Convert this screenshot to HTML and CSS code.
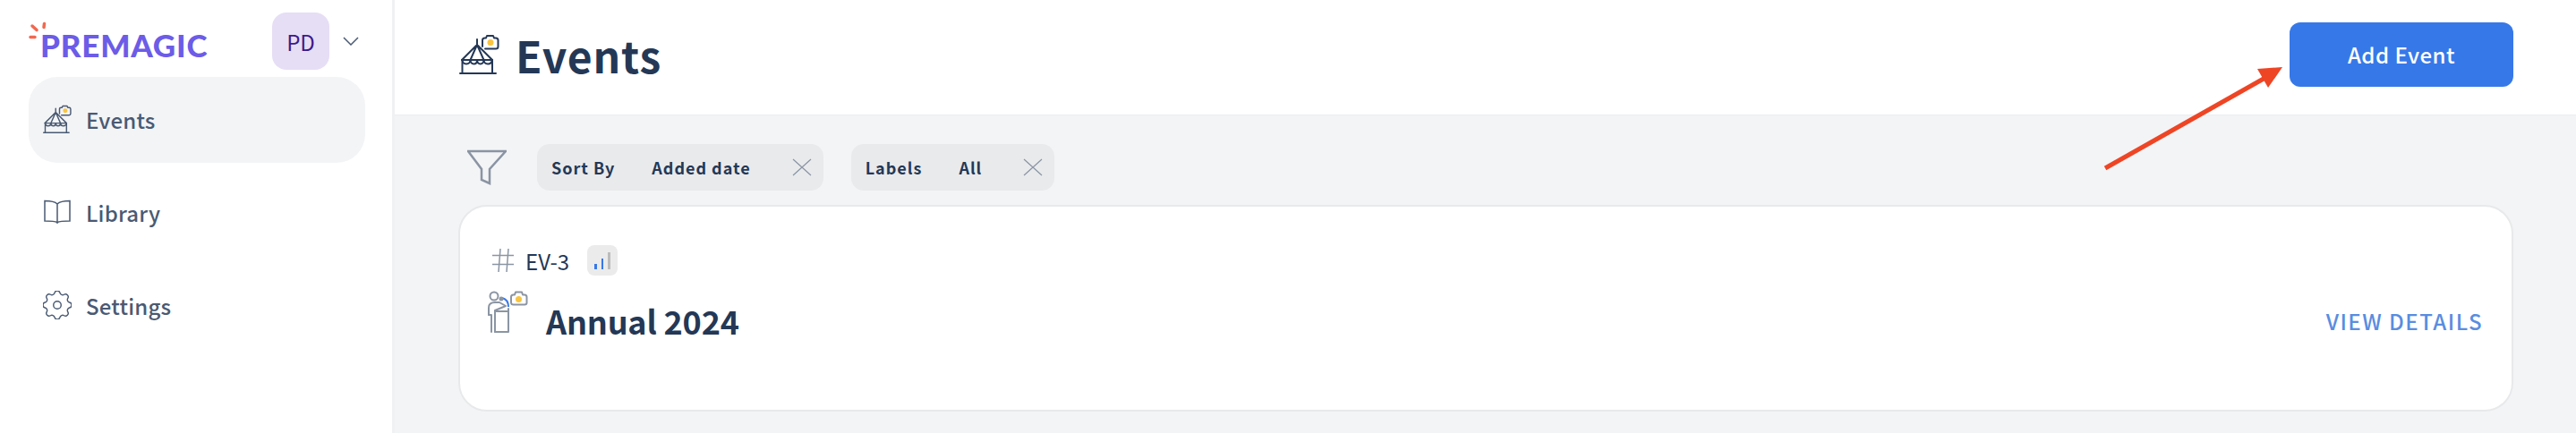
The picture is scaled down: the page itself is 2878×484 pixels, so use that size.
FILE: index.html
```html
<!doctype html>
<html lang="en">
 <head>
  <meta charset="utf-8">
  <title>Events</title>
  <link rel="stylesheet" href="styles.css">
 </head>
 <body>
  <svg class="icon-defs" width="0" height="0">
   <symbol id="tent" viewBox="0 0 45 45">
    <g fill="none" stroke="currentColor" stroke-width="2" stroke-linecap="round" stroke-linejoin="round">
     <path d="M1 44H41M3.500 43V30M37 43V30M3 29L20 12L37 29M20 12V6M20 12L12.500 29M20 12L27.500 29"/>
     <path d="M3 29H37M3.500 29C4 35 12 35 12.500 29C13 35 20 35 20 29C20.500 35 27 35 27.500 29C28 35 36 35 37 29"/>
     <path d="M26 14V7C26 5.500 27 4.500 28.500 4.500H30L31 2H38L39 4.500H41C42.500 4.500 43.500 5.500 43.500 7V14C43.500 15.500 42.500 16.500 41 16.500H29"/>
    </g>
    <circle cx="35" cy="9.500" r="3.500" fill="#f9c440"/>
   </symbol>
  </svg>
  <div class="page">
   <aside class="sidebar">
    <div class="sidebar-top">
     <div class="logo">
      <svg class="logo-spark" viewBox="0 0 20 22" width="20" height="22">
       <g stroke="#f2684f" stroke-width="3.500" stroke-linecap="round">
        <path d="M2 17.500H7M4 5L9 9.500M17.500 2.500L17 6.500"/>
       </g>
      </svg>
      <span class="logo-text">PREMAGIC</span>
     </div>
     <div class="avatar">PD</div>
     <svg class="chevron" viewBox="0 0 18 10" width="18" height="10">
      <path d="M1 1L9 9L17 1" fill="none" stroke="#4a5a73" stroke-width="1.500"/>
     </svg>
    </div>
    <nav class="nav">
     <a class="nav-item nav-item-active">
      <svg class="nav-icon" width="32" height="32"><use href="#tent"/></svg>
      <span>Events</span>
     </a>
     <a class="nav-item">
      <svg class="nav-icon" viewBox="0 0 30 28" width="30" height="28">
       <path d="M15 25V5C12 2 6 1.500 1 1.500V24C6 24 12 24 15 25.500C18 24 24 24 29 24V1.500C24 1.500 18 2 15 5M15 25.500V27" fill="none" stroke="currentColor" stroke-width="1.500"/>
      </svg>
      <span>Library</span>
     </a>
     <a class="nav-item">
      <svg class="nav-icon" viewBox="3 3 18 18" width="32" height="32">
       <path d="M10.325 4.317c.426-1.756 2.924-1.756 3.35 0a1.724 1.724 0 002.573 1.066c1.543-.94 3.31.826 2.37 2.37a1.724 1.724 0 001.065 2.572c1.756.426 1.756 2.924 0 3.35a1.724 1.724 0 00-1.066 2.573c.94 1.543-.826 3.31-2.37 2.37a1.724 1.724 0 00-2.572 1.065c-.426 1.756-2.924 1.756-3.35 0a1.724 1.724 0 00-2.573-1.066c-1.543.94-3.31-.826-2.37-2.37a1.724 1.724 0 00-1.065-2.572c-1.756-.426-1.756-2.924 0-3.35a1.724 1.724 0 001.066-2.573c-.94-1.543.826-3.31 2.37-2.37.996.608 2.296.07 2.572-1.065z" fill="none" stroke="currentColor" stroke-width="0.800"/>
       <circle cx="12" cy="12" r="2.400" fill="none" stroke="currentColor" stroke-width="0.800"/>
      </svg>
      <span>Settings</span>
     </a>
    </nav>
   </aside>
   <main class="main">
    <header class="header">
     <div class="header-title">
      <svg class="header-icon" width="45" height="45"><use href="#tent"/></svg>
      <h1>Events</h1>
     </div>
     <button class="btn-primary">Add Event</button>
    </header>
    <section class="content">
     <div class="filters">
      <svg class="funnel" viewBox="0 0 44 40" width="44" height="40">
       <path d="M1 2H43L25 22V38L16 34V22Z" fill="none" stroke="#8a94a3" stroke-width="2.500"/>
      </svg>
      <div class="chip">
       <span class="chip-label">Sort By</span>
       <span class="chip-value">Added date</span>
       <svg class="chip-close" viewBox="0 0 22 20" width="22" height="20"><path d="M1 1L21 19M21 1L1 19" stroke="#8a94a3" stroke-width="1.200"/></svg>
      </div>
      <div class="chip">
       <span class="chip-label">Labels</span>
       <span class="chip-value">All</span>
       <svg class="chip-close" viewBox="0 0 22 20" width="22" height="20"><path d="M1 1L21 19M21 1L1 19" stroke="#8a94a3" stroke-width="1.200"/></svg>
      </div>
     </div>
     <article class="card">
      <div class="card-code">
       <svg class="hash" viewBox="0 0 24 26" width="24" height="26">
        <path d="M9 0L7 26M18 0L16 26M0 7.500H24M0 17.500H24" fill="none" stroke="#8b95a3" stroke-width="1.500"/>
       </svg>
       <span>EV-3</span>
       <div class="signal">
        <i class="bar bar-1"></i>
        <i class="bar bar-2"></i>
        <i class="bar bar-3"></i>
       </div>
      </div>
      <div class="card-main">
       <svg class="speaker" viewBox="0 0 45 49" width="45" height="49">
        <g fill="none" stroke="#8b95a3" stroke-width="2" stroke-linecap="round" stroke-linejoin="round">
         <circle cx="7" cy="7" r="4.500"/>
         <path d="M1 28V20C1 15 4 14 8 14H13L20 18L8 23V47"/>
         <path d="M1 28H4V47M8 47H23V21M8 24H23"/>
         <path d="M26 14V8C26 6.500 27 5.500 28.500 5.500H30L31 2.500H38L39 5.500H41C42.500 5.500 43.500 6.500 43.500 8V14.500C43.500 16 42.500 16.500 41 16.500H28.500C27 16.500 26 15.500 26 14Z"/>
        </g>
        <path d="M16 9C20 10 23 13 23 19" fill="none" stroke="#3778e8" stroke-width="2"/>
        <circle cx="15" cy="10" r="2.500" fill="#8b95a3"/>
        <circle cx="34.500" cy="10.500" r="3.500" fill="#f9c440"/>
       </svg>
       <h2>Annual 2024</h2>
       <a class="view-details">VIEW DETAILS</a>
      </div>
     </article>
    </section>
   </main>
  </div>
  <!-- red annotation arrow drawn over the screenshot -->
  <svg class="annotation" viewBox="0 0 205 125" width="205" height="125">
   <path d="M2 117L186 13" stroke="#ee4525" stroke-width="5"/>
   <path d="M200 4L172 6L184 27Z" fill="#ee4525"/>
  </svg>
 </body>
</html>
```

FILE: styles.css
```css
body {
	margin: 0;
	padding: 0;
	background-color: #ffffff;
	font-family: "Noto Sans CJK JP", "Noto Sans", sans-serif;
	color: #243856;
}

.icon-defs {
	position: absolute;
}

.page {
	display: flex;
	height: 484px;
	overflow: hidden;
}

/* sidebar */
.sidebar {
	flex-shrink: 0;
	width: 376px;
	border-right: 3px solid #f0f1f3;
	padding: 14px 30px 0 32px;
}

.sidebar-top {
	display: flex;
	align-items: center;
	height: 64px;
}

.logo {
	display: flex;
	align-items: flex-end;
	flex: 1;
	position: relative;
	padding-left: 13px;
}

.logo-spark {
	position: absolute;
	left: 0;
	top: -1px;
}

.logo-text {
	font-family: "Lato", sans-serif;
	font-weight: 900;
	font-size: 35px;
	line-height: 34px;
	color: #6c5ce7;
	letter-spacing: 0.8px;
	margin-top: 8px;
}

.avatar {
	width: 64px;
	height: 64px;
	border-radius: 16px;
	background-color: #e6def5;
	color: #3d1a8c;
	font-size: 24px;
	display: flex;
	align-items: center;
	justify-content: center;
}

.chevron {
	margin: 0 7px 0 15px;
}

.nav {
	display: flex;
	flex-direction: column;
	gap: 8px;
	margin-top: 8px;
}

.nav-item {
	display: flex;
	align-items: center;
	gap: 16px;
	height: 96px;
	box-sizing: border-box;
	padding: 0 0 2px 16px;
	border-radius: 32px;
	color: #4a5a73;
	font-size: 24px;
	font-weight: 500;
	letter-spacing: 0.2px;
}

.nav-item-active {
	background-color: #f3f4f6;
}

.nav-icon {
	width: 32px;
	flex-shrink: 0;
}

/* main */
.main {
	flex: 1;
	display: flex;
	flex-direction: column;
	min-width: 0;
}

.header {
	height: 129px;
	flex-shrink: 0;
	display: flex;
	align-items: center;
	justify-content: space-between;
	padding: 0 70px 7px 72px;
	box-sizing: border-box;
	border-bottom: 1px solid #ecedef;
}

.header-title {
	display: flex;
	align-items: center;
	gap: 18px;
}

.header-title h1 {
	margin: 0;
	font-size: 48px;
	font-weight: 700;
	line-height: 60px;
	letter-spacing: 0.8px;
}

.btn-primary {
	width: 250px;
	height: 72px;
	border: 0;
	border-radius: 12px;
	background-color: #3778e8;
	color: #ffffff;
	font-family: inherit;
	font-size: 24px;
	font-weight: 500;
	letter-spacing: 0.5px;
}

.content {
	flex: 1;
	background-color: #f3f4f6;
	padding: 32px 70px 0 71px;
}

.filters {
	display: flex;
	align-items: center;
	gap: 31px;
	height: 52px;
	padding-left: 10px;
}

.funnel {
	margin: 0 3px 0 0;
}

.chip {
	display: flex;
	align-items: center;
	height: 52px;
	padding: 0 13px 0 16px;
	border-radius: 14px;
	background-color: #e9eaec;
	font-size: 18px;
	font-weight: 700;
	letter-spacing: 1px;
}

.chip-value {
	margin-left: 41px;
}

.chip-close {
	margin-left: 46px;
}

.card {
	margin-top: 16px;
	height: 231px;
	box-sizing: border-box;
	border: 2px solid #e8e9eb;
	border-radius: 32px;
	background-color: #ffffff;
	padding: 43px 32px 0 31px;
}

.card-code {
	display: flex;
	align-items: center;
	height: 34px;
	font-size: 24px;
	padding-left: 5px;
}

.hash {
	margin-right: 13px;
}

.signal {
	display: flex;
	align-items: flex-end;
	gap: 5px;
	width: 34px;
	height: 34px;
	box-sizing: border-box;
	margin-left: 20px;
	padding: 7px 8px;
	border-radius: 8px;
	background-color: #ebebeb;
}

.bar {
	display: block;
	width: 3px;
	background-color: #3778e8;
}

.bar-1 {
	height: 6px;
}

.bar-2 {
	height: 12px;
}

.bar-3 {
	height: 19px;
	background-color: #bcbcbc;
}

.card-main {
	display: flex;
	align-items: flex-end;
	margin-top: 17px;
	height: 48px;
}

.speaker {
	margin-right: 20px;
}

.card-main h2 {
	flex: 1;
	margin: 0 0 -5px;
	font-size: 36px;
	font-weight: 700;
	line-height: 40px;
	letter-spacing: -0.2px;
}

.view-details {
	color: #5a8de0;
	font-size: 24px;
	font-weight: 500;
	letter-spacing: 1.5px;
	line-height: 40px;
	margin-bottom: -6px;
}

.annotation {
	position: absolute;
	left: 2350px;
	top: 71px;
}
```
